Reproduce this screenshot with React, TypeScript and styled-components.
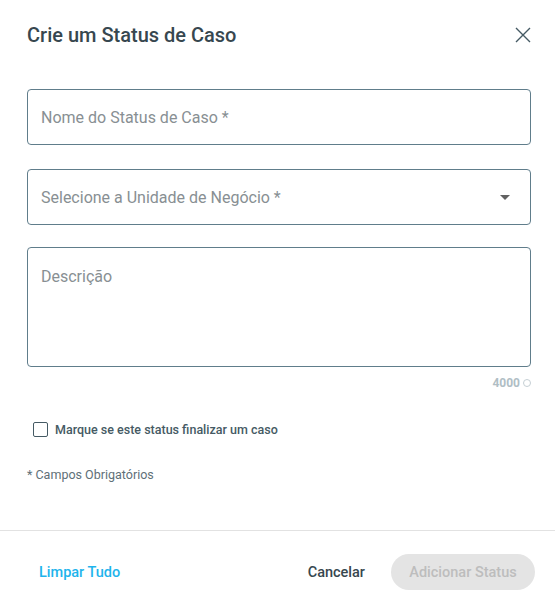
import React from "react";
import styled, { createGlobalStyle } from "styled-components";

const Global = createGlobalStyle`
  html, body { margin: 0; padding: 0; background: #fff; }
  body { font-family: Roboto, "Liberation Sans", sans-serif; -webkit-font-smoothing: antialiased; }
  * { box-sizing: border-box; }
`;

const Dialog = styled.div`
  width: 555px;
  height: 603px;
  display: flex;
  flex-direction: column;
  background: #fff;
`;

const Header = styled.div`
  display: flex;
  align-items: center;
  justify-content: space-between;
  height: 70px;
  padding: 0 20px 0 27px;
`;

const Title = styled.h2`
  margin: 0;
  font-size: 20px;
  font-weight: 500;
  color: #37474f;
  letter-spacing: 0;
`;

const CloseButton = styled.button`
  width: 24px;
  height: 24px;
  border: none;
  background: none;
  padding: 0;
  display: flex;
  align-items: center;
  justify-content: center;
  cursor: pointer;
`;

const Body = styled.div`
  flex: 1;
  display: flex;
  flex-direction: column;
  padding: 19px 24px 0 27px;
`;

const Field = styled.div<{ $h: number; $mb: number }>`
  height: ${(p) => p.$h}px;
  margin-bottom: ${(p) => p.$mb}px;
  border: 1px solid #607d8b;
  border-radius: 4px;
  display: flex;
  align-items: center;
  justify-content: space-between;
  padding: 1px 20px 0 13px;
  font-size: 16px;
  color: #888f93;
`;

const TextArea = styled.div`
  height: 120px;
  border: 1px solid #607d8b;
  border-radius: 4px;
  padding: 19px 13px;
  font-size: 16px;
  color: #888f93;
`;

const Counter = styled.div`
  display: flex;
  justify-content: flex-end;
  align-items: center;
  gap: 3px;
  margin-top: 9px;
  font-size: 12px;
  font-weight: 700;
  color: #b0bec5;
`;

const Ring = styled.span`
  width: 8px;
  height: 8px;
  border: 1px solid #c5cfd4;
  border-radius: 50%;
  display: inline-block;
`;

const CheckRow = styled.label`
  display: flex;
  align-items: center;
  gap: 7px;
  margin: 32px 0 0 6px;
  font-size: 12.5px;
  font-weight: 500;
  color: #455a64;
`;

const Box = styled.span`
  width: 15px;
  height: 15px;
  border: 1.5px solid #455a64;
  border-radius: 2px;
  display: inline-block;
`;

const Required = styled.div`
  margin-top: 30px;
  font-size: 12.5px;
  color: #607078;
`;

const Footer = styled.div`
  height: 73px;
  border-top: 1px solid #e2e2e2;
  display: flex;
  align-items: flex-start;
  padding: 23px 20px 0 27px;
`;

const TextButton = styled.button<{ $color: string }>`
  border: none;
  background: none;
  font-family: inherit;
  font-size: 14.5px;
  font-weight: 500;
  color: ${(p) => p.$color};
  padding: 0 12px;
  height: 36px;
  cursor: pointer;
`;

const Spacer = styled.div`
  flex: 1;
`;

const PillButton = styled.button`
  height: 36px;
  width: 144px;
  border: none;
  border-radius: 18px;
  background: #e4e4e4;
  color: #bdbdbd;
  font-family: inherit;
  font-size: 14.5px;
  font-weight: 500;
  margin-left: 14px;
`;

export default function App() {
  return (
    <>
      <Global />
      <Dialog>
        <Header>
          <Title>Crie um Status de Caso</Title>
          <CloseButton aria-label="Fechar">
            <svg width="16" height="16" viewBox="0 0 16 16">
              <path d="M1 1L15 15M15 1L1 15" stroke="#455a64" strokeWidth="1.4" />
            </svg>
          </CloseButton>
        </Header>
        <Body>
          <Field $h={56} $mb={24}>Nome do Status de Caso *</Field>
          <Field $h={56} $mb={22}>
            <span>Selecione a Unidade de Negócio *</span>
            <svg width="10" height="5" viewBox="0 0 10 5">
              <path d="M0 0H10L5 5Z" fill="#616161" />
            </svg>
          </Field>
          <TextArea>Descrição</TextArea>
          <Counter>
            4000 <Ring />
          </Counter>
          <CheckRow>
            <Box />
            Marque se este status finalizar um caso
          </CheckRow>
          <Required>* Campos Obrigatórios</Required>
        </Body>
        <Footer>
          <TextButton $color="#1eb4ec">Limpar Tudo</TextButton>
          <Spacer />
          <TextButton $color="#37474f">Cancelar</TextButton>
          <PillButton>Adicionar Status</PillButton>
        </Footer>
      </Dialog>
    </>
  );
}
